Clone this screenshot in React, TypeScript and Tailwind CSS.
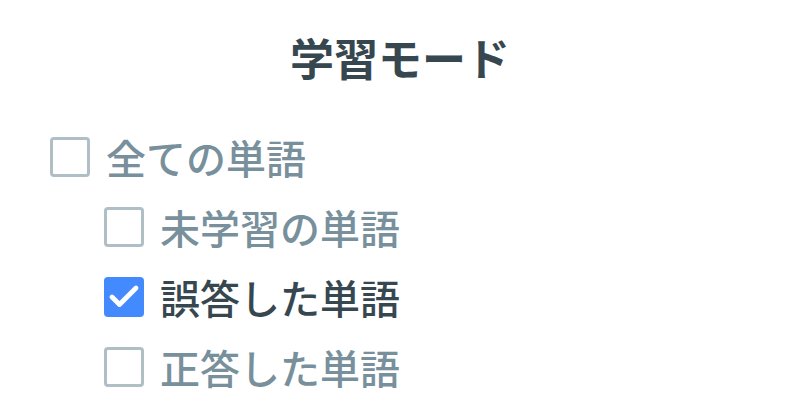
import { Check } from "lucide-react";

interface ModeOption {
  label: string;
  checked: boolean;
  indent: boolean;
}

const options: ModeOption[] = [
  { label: "全ての単語", checked: false, indent: false },
  { label: "未学習の単語", checked: false, indent: true },
  { label: "誤答した単語", checked: true, indent: true },
  { label: "正答した単語", checked: false, indent: true },
];

function CheckRow({ label, checked, indent }: ModeOption) {
  return (
    <label className={`flex h-[70px] items-center gap-4 ${indent ? "pl-[54px]" : ""}`}>
      {checked ? (
        <span className="flex h-[40px] w-[40px] items-center justify-center rounded-[4px] bg-[#448aff]">
          <Check size={36} strokeWidth={3.2} className="text-white" />
        </span>
      ) : (
        <span className="h-[40px] w-[40px] rounded-[4px] border-[3px] border-[#b0bec5] bg-white" />
      )}
      <span
        className={`text-[40px] font-medium leading-none ${
          checked ? "text-[#37474f]" : "text-[#78909c]"
        }`}
      >
        {label}
      </span>
    </label>
  );
}

export default function App() {
  return (
    <div
      className="h-[419px] w-[800px] bg-white pt-[29px]"
      style={{ fontFamily: '"Noto Sans CJK JP", "Noto Sans", sans-serif' }}
    >
      <h1 className="text-center text-[44px] font-semibold leading-[56px] text-[#37474f]">
        学習モード
      </h1>
      <div className="mt-[37px] flex flex-col pl-[50px]">
        {options.map((o) => (
          <CheckRow key={o.label} {...o} />
        ))}
      </div>
    </div>
  );
}
